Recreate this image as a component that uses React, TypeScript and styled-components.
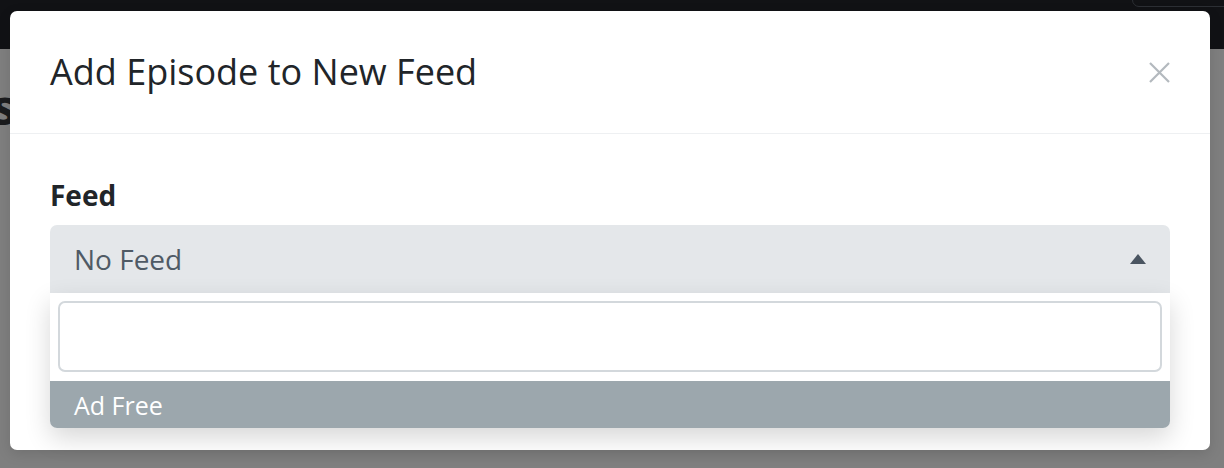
import styled, { createGlobalStyle } from "styled-components";

const GlobalStyle = createGlobalStyle`
  html, body {
    margin: 0;
    padding: 0;
    width: 1224px;
    height: 468px;
    overflow: hidden;
    background: #7f7f7f;
    font-family: "Open Sans", "Liberation Sans", sans-serif;
  }
`;

const Page = styled.div`
  position: relative;
  width: 1224px;
  height: 468px;
  overflow: hidden;
  background: #7f7f7f;
`;

const Navbar = styled.div`
  height: 49px;
  background: #111215;
  display: flex;
  justify-content: flex-end;
  align-items: flex-start;
`;

const NavButton = styled.div`
  width: 100px;
  height: 40px;
  margin-top: -35px;
  margin-right: -10px;
  border: 1px solid #2c2f34;
  border-radius: 7px;
`;

// page heading behind the backdrop, only its edge peeks out on the left
const PageHeading = styled.h1`
  margin: 25px 0 0 -400px;
  width: 416px;
  text-align: right;
  font-size: 48px;
  font-weight: 700;
  line-height: 1.362;
  white-space: nowrap;
  color: #1b1c1e;
`;

const ModalLayer = styled.div`
  position: absolute;
  inset: 0;
  padding: 11px 14px 0 10px;
`;

const Modal = styled.div`
  background: #fff;
  border-radius: 7px;
  box-shadow: 0 4px 14px rgba(0, 0, 0, 0.12);
`;

const ModalHeader = styled.div`
  height: 122px;
  display: flex;
  align-items: center;
  justify-content: space-between;
  padding: 0 40px;
  border-bottom: 1px solid #eef0f2;
`;

const Title = styled.h5`
  margin: 0;
  font-size: 36px;
  font-weight: 400;
  line-height: 1.2;
  color: #212529;
`;

const CloseButton = styled.button`
  border: 0;
  background: none;
  padding: 0;
  width: 22px;
  height: 22px;
  display: flex;
  align-items: center;
  justify-content: center;
  cursor: pointer;
`;

const ModalBody = styled.div`
  padding: 44px 40px 157px;
`;

const Label = styled.div`
  font-size: 28px;
  font-weight: 700;
  line-height: 34px;
  color: #212529;
  margin-bottom: 13px;
`;

const SelectWrap = styled.div`
  position: relative;
`;

const SelectBox = styled.div`
  height: 68px;
  box-sizing: border-box;
  display: flex;
  align-items: center;
  justify-content: space-between;
  padding: 0 24px;
  background: #e4e7ea;
  border-radius: 7px 7px 0 0;
  font-size: 28px;
  color: #4f5a65;
`;

const Caret = styled.span`
  width: 0;
  height: 0;
  border-left: 8px solid transparent;
  border-right: 8px solid transparent;
  border-bottom: 10px solid #4a5561;
  margin-top: -1px;
`;

const Dropdown = styled.div`
  position: absolute;
  top: 100%;
  left: 0;
  right: 0;
  background: #fff;
  padding-top: 8px;
  border-radius: 0 0 7px 7px;
  box-shadow: 0 10px 26px rgba(0, 0, 0, 0.16);
  display: flex;
  flex-direction: column;
  gap: 9px;
`;

const SearchInput = styled.input`
  margin: 0 8px;
  height: 71px;
  box-sizing: border-box;
  border: 2px solid #d3d8dc;
  border-radius: 7px;
  font-family: inherit;
  font-size: 26px;
  padding: 0 14px;
  outline: none;
`;

const Option = styled.div<{ $active?: boolean }>`
  height: 47px;
  display: flex;
  align-items: center;
  padding: 0 24px;
  font-size: 25px;
  color: ${(p) => (p.$active ? "#fff" : "#212529")};
  background: ${(p) => (p.$active ? "#9ca7ad" : "#fff")};
  border-radius: 0 0 7px 7px;
`;

export default function App() {
  return (
    <Page>
      <GlobalStyle />
      <Navbar>
        <NavButton />
      </Navbar>
      <PageHeading>Episodes</PageHeading>
      <ModalLayer>
        <Modal>
          <ModalHeader>
            <Title>Add Episode to New Feed</Title>
            <CloseButton aria-label="Close">
              <svg width="21" height="21" viewBox="0 0 21 21">
                <path d="M1 1 L20 20 M20 1 L1 20" stroke="#b3b9be" strokeWidth="2.2" />
              </svg>
            </CloseButton>
          </ModalHeader>
          <ModalBody>
            <Label>Feed</Label>
            <SelectWrap>
              <SelectBox>
                <span>No Feed</span>
                <Caret />
              </SelectBox>
              <Dropdown>
                <SearchInput />
                <Option $active>Ad Free</Option>
              </Dropdown>
            </SelectWrap>
          </ModalBody>
        </Modal>
      </ModalLayer>
    </Page>
  );
}
